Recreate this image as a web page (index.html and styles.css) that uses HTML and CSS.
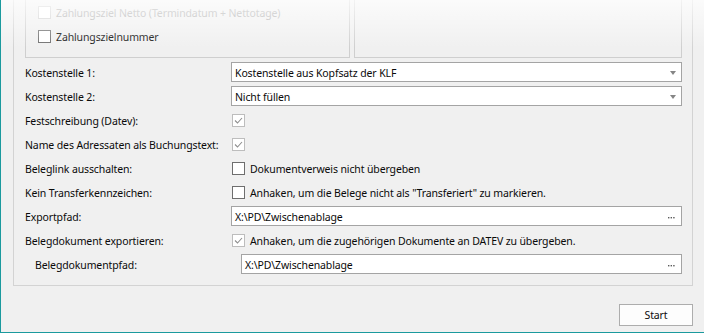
FILE: index.html
```html
<!DOCTYPE html>
<html lang="de">
<head>
<meta charset="utf-8">
<title>Export</title>
<link rel="stylesheet" href="styles.css">
</head>
<body>
<div class="window">
  <div class="outer">
    <div class="top-row">
      <div class="inner inner-left">
        <div class="chk disabled"><span class="box"></span><span class="txt">Zahlungsziel Netto (Termindatum + Nettotage)</span></div>
        <div class="chk"><span class="box"></span><span class="txt">Zahlungszielnummer</span></div>
      </div>
      <div class="inner inner-right"></div>
    </div>
    <div class="form">
      <div class="lbl">Kostenstelle 1:</div>
      <div class="field combo"><span class="val">Kostenstelle aus Kopfsatz der KLF</span><span class="arrow"></span></div>

      <div class="lbl">Kostenstelle 2:</div>
      <div class="field combo"><span class="val">Nicht füllen</span><span class="arrow"></span></div>

      <div class="lbl">Festschreibung (Datev):</div>
      <div class="chk"><span class="box checked"><svg width="11" height="11" viewBox="0 0 11 11"><polyline points="2,5.5 4.5,8 9,3" /></svg></span></div>

      <div class="lbl">Name des Adressaten als Buchungstext:</div>
      <div class="chk"><span class="box checked"><svg width="11" height="11" viewBox="0 0 11 11"><polyline points="2,5.5 4.5,8 9,3" /></svg></span></div>

      <div class="lbl">Beleglink ausschalten:</div>
      <div class="chk"><span class="box"></span><span class="txt">Dokumentverweis nicht übergeben</span></div>

      <div class="lbl">Kein Transferkennzeichen:</div>
      <div class="chk"><span class="box"></span><span class="txt">Anhaken, um die Belege nicht als "Transferiert" zu markieren.</span></div>

      <div class="lbl">Exportpfad:</div>
      <div class="field"><span class="val">X:\PD\Zwischenablage</span><svg class="dots" width="7" height="2" viewBox="0 0 7 2"><rect x="0" y="0" width="1.4" height="1.4"/><rect x="2.6" y="0" width="1.4" height="1.4"/><rect x="5.2" y="0" width="1.4" height="1.4"/></svg></div>

      <div class="lbl">Belegdokument exportieren:</div>
      <div class="chk"><span class="box checked"><svg width="11" height="11" viewBox="0 0 11 11"><polyline points="2,5.5 4.5,8 9,3" /></svg></span><span class="txt">Anhaken, um die zugehörigen Dokumente an DATEV zu übergeben.</span></div>

      <div class="lbl indent">Belegdokumentpfad:</div>
      <div class="field indent"><span class="val">X:\PD\Zwischenablage</span><svg class="dots" width="7" height="2" viewBox="0 0 7 2"><rect x="0" y="0" width="1.4" height="1.4"/><rect x="2.6" y="0" width="1.4" height="1.4"/><rect x="5.2" y="0" width="1.4" height="1.4"/></svg></div>
    </div>
  </div>
  <div class="footer">
    <button class="btn" type="button">Start</button>
  </div>
  <div class="fade"></div>
</div>
</body>
</html>
```

FILE: styles.css
```css
* { box-sizing: border-box; }

html, body {
  margin: 0;
  padding: 0;
  background: #f0f0f0;
}

body {
  font-family: "Noto Sans", "Open Sans", sans-serif;
  font-size: 10.5px;
  letter-spacing: -0.12px;
  color: #0a0a0a;
}

.window {
  position: relative;
  width: 704px;
  height: 333px;
  overflow: hidden;
  background: #f0f0f0;
  border-left: 1px solid #1b9a9e;
  border-bottom: 1px solid #1b9a9e;
}

.outer {
  margin-left: 12px;
  width: 680px;
  height: 286px;
  border: 1px solid #d3d3d3;
  border-top: none;
  padding: 0 10px 0 11px;
}

.top-row {
  display: flex;
  gap: 4px;
  height: 58px;
}

.inner {
  height: 58px;
  border: 1px solid #cfcfcf;
  border-top: none;
}

.inner-left {
  width: 325px;
  padding-left: 12px;
  display: flex;
  flex-direction: column;
}

.inner-left .chk {
  height: 24px;
}

.inner-right {
  width: 328px;
}

.form {
  margin-top: 2px;
  display: grid;
  grid-template-columns: 206px 1fr;
  grid-auto-rows: 24px;
  align-items: center;
}

.lbl {
  white-space: nowrap;
  padding-top: 2px;
}

.lbl.indent {
  padding-left: 10px;
}

.chk {
  display: flex;
  align-items: center;
  gap: 5px;
  white-space: nowrap;
}

.txt {
  padding-top: 2px;
}

.form .chk {
  padding-left: 1px;
}

.box {
  width: 13px;
  height: 13px;
  flex: none;
  border: 1px solid #6e6e6e;
  background: #ffffff;
  display: flex;
  align-items: center;
  justify-content: center;
}

.box.checked {
  border-color: #bdbdbd;
}

.box svg polyline {
  fill: none;
  stroke: #8f8f8f;
  stroke-width: 1.1;
}

.chk.disabled {
  color: #a8a8a8;
}

.chk.disabled .box {
  border-color: #cfcfcf;
}

.field {
  height: 20px;
  border: 1px solid #a4a4a4;
  background: #ffffff;
  display: flex;
  align-items: center;
  padding: 0 5px 0 3px;
}

.field.indent {
  margin-left: 10px;
}

.field .val {
  flex: 1;
  white-space: nowrap;
  padding-top: 2px;
}

.arrow {
  width: 0;
  height: 0;
  border-left: 3.5px solid transparent;
  border-right: 3.5px solid transparent;
  border-top: 4px solid #858585;
  margin-top: 2px;
  margin-right: 0;
}

.dots {
  fill: #5a5a5a;
  margin-top: 4px;
  margin-right: 1px;
}

.footer {
  display: flex;
  justify-content: flex-end;
  padding: 18px 11px 0 0;
}

.btn {
  width: 74px;
  height: 22px;
  border: 1px solid #adadad;
  background: #fdfdfd;
  font-family: inherit;
  font-size: 10.5px;
  letter-spacing: -0.12px;
  color: #0a0a0a;
  padding: 0;
}

.fade {
  position: absolute;
  top: 0;
  left: 0;
  right: 0;
  height: 48px;
  background: linear-gradient(rgba(255,255,255,0.75), rgba(255,255,255,0));
  pointer-events: none;
}
```
